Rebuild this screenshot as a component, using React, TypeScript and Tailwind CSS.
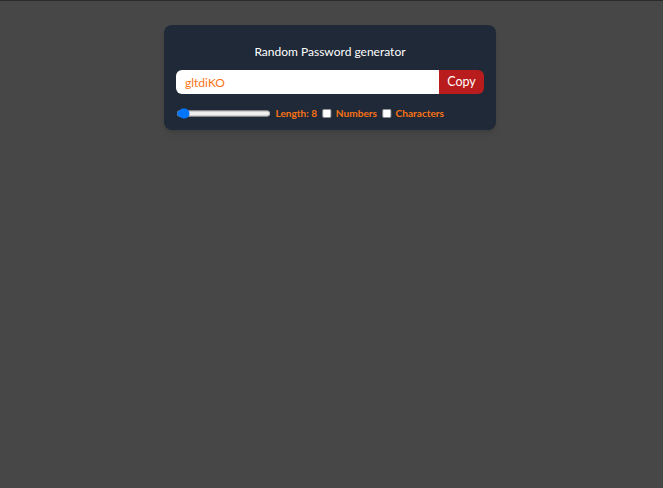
import { useState } from "react";

export default function App() {
  const [length, setLength] = useState(8);
  const [numbers, setNumbers] = useState(false);
  const [chars, setChars] = useState(false);
  const [password] = useState("gltdiKO");

  return (
    <div className="min-h-screen w-full border-t border-[#2b2b2b] bg-[#474747] pr-[3px] pt-[24px] font-['Lato',sans-serif]">
      <div className="mx-auto w-[332px] rounded-lg bg-[#1f2937] px-3 py-[9px] text-[#f97316] shadow-md">
        <h1 className="my-[9px] text-center text-[12px] leading-[18px] text-white">
          Random Password generator
        </h1>
        <div className="mb-3 flex overflow-hidden rounded-md">
          <input
            type="text"
            value={password}
            readOnly
            placeholder="Password"
            className="h-[24px] w-full bg-white px-[9px] text-[12px] text-[#f97316] outline-none"
          />
          <button className="w-[45px] shrink-0 bg-[#b91c1c] text-[12.5px] text-white">
            Copy
          </button>
        </div>
        <div className="flex items-center gap-x-[5px] text-[10.1px] font-bold">
          <div className="flex items-center gap-x-[4px]">
            <input
              type="range"
              min={6}
              max={100}
              value={length}
              onChange={(e) => setLength(Number(e.target.value))}
              className="w-[129px] cursor-pointer [zoom:0.74]"
            />
            <label>Length: {length}</label>
          </div>
          <div className="flex items-center gap-x-[4px]">
            <input
              type="checkbox"
              checked={numbers}
              onChange={() => setNumbers((p) => !p)}
              className="[zoom:0.74]"
            />
            <label>Numbers</label>
          </div>
          <div className="flex items-center gap-x-[4px]">
            <input
              type="checkbox"
              checked={chars}
              onChange={() => setChars((p) => !p)}
              className="[zoom:0.74]"
            />
            <label>Characters</label>
          </div>
        </div>
      </div>
    </div>
  );
}
